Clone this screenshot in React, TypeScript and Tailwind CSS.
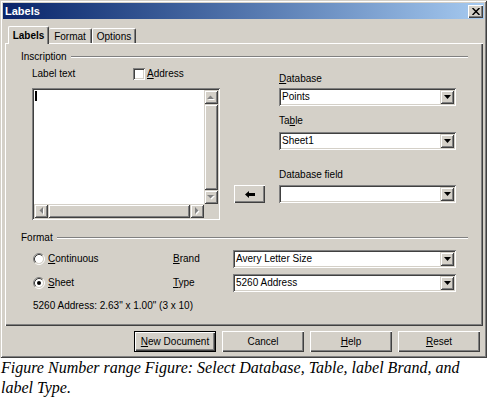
const sunken =
  "shadow-[inset_1px_1px_0_#808080,inset_-1px_-1px_0_#ffffff,inset_2px_2px_0_#404040,inset_-2px_-2px_0_#d4d0c8]";
const raised = "shadow-[inset_1px_1px_0_#ffffff,inset_-1px_-1px_0_#404040,inset_-2px_-2px_0_#808080]";
const raisedSb =
  "shadow-[inset_1px_1px_0_#d4d0c8,inset_-1px_-1px_0_#404040,inset_2px_2px_0_#ffffff,inset_-2px_-2px_0_#808080]";

function U({ children }: { children: string }) {
  return <span className="underline underline-offset-[1px]">{children}</span>;
}

function DropArrow() {
  return (
    <svg width="7" height="4" viewBox="0 0 7 4">
      <path d="M0 0h7L3.5 4z" fill="#000" />
    </svg>
  );
}

function Combo({ value, className }: { value: string; className: string }) {
  return (
    <div className={`${className} flex h-[18px] bg-white p-[2px] ${sunken}`}>
      <div className="flex flex-1 items-center overflow-hidden whitespace-nowrap pl-[1px]">{value}</div>
      <div className={`flex h-[14px] w-[14px] items-center justify-center bg-[#d4d0c8] ${raisedSb}`}>
        <DropArrow />
      </div>
    </div>
  );
}

function GrayArrow({ dir }: { dir: "up" | "down" | "left" | "right" }) {
  const paths = {
    up: "M0 4h7L3.5 0.5z",
    down: "M0 0h7L3.5 3.5z",
    left: "M4 0v7L0.5 3.5z",
    right: "M0 0v7L3.5 3.5z",
  };
  const vertical = dir === "up" || dir === "down";
  return (
    <svg width={vertical ? 8 : 5} height={vertical ? 5 : 8} viewBox={vertical ? "0 0 8 5" : "0 0 5 8"}>
      <path d={paths[dir]} fill="#fff" transform="translate(1 1)" />
      <path d={paths[dir]} fill="#808080" />
    </svg>
  );
}

function SbButton({ dir }: { dir: "up" | "down" | "left" | "right" }) {
  return (
    <div className={`flex h-[14px] w-[14px] items-center justify-center bg-[#d4d0c8] ${raisedSb}`}>
      <GrayArrow dir={dir} />
    </div>
  );
}

function Radio({ checked }: { checked?: boolean }) {
  return (
    <svg width="12" height="12" viewBox="0 0 12 12" className="shrink-0">
      <circle cx="6" cy="6" r="4" fill="#fff" />
      <path d="M2.11 9.89A5.5 5.5 0 0 1 9.89 2.11" stroke="#808080" fill="none" />
      <path d="M9.89 2.11A5.5 5.5 0 0 1 2.11 9.89" stroke="#fff" fill="none" />
      <path d="M2.82 9.18A4.5 4.5 0 0 1 9.18 2.82" stroke="#404040" fill="none" />
      <path d="M9.18 2.82A4.5 4.5 0 0 1 2.82 9.18" stroke="#d4d0c8" fill="none" />
      {checked && <circle cx="6" cy="6" r="2" fill="#000" />}
    </svg>
  );
}

function GroupHeader({ label }: { label: string }) {
  return (
    <div className="flex h-[12px] items-center pl-[16px] pr-[15px]">
      <span>{label}</span>
      <div className="ml-[4px] h-[2px] flex-1 border-t border-b border-t-[#808080] border-b-white" />
    </div>
  );
}

function PushButton({ children, isDefault }: { children: React.ReactNode; isDefault?: boolean }) {
  return (
    <div className={`h-[21px] w-[82px] ${isDefault ? "border border-black" : ""}`}>
      <div className={`flex h-full w-full items-center justify-center bg-[#d4d0c8] ${raised}`}>{children}</div>
    </div>
  );
}

export default function App() {
  return (
    <div className="h-[405px] w-[488px] bg-white font-['Liberation_Sans',Arial,sans-serif] text-[10px] leading-[12px] text-black">
      <div
        className={`flex h-[358px] w-[487px] flex-col bg-[#d4d0c8] p-[3px] shadow-[inset_1px_1px_0_#d4d0c8,inset_-1px_-1px_0_#404040,inset_2px_2px_0_#ffffff,inset_-2px_-2px_0_#808080]`}
      >
        {/* title bar */}
        <div className="flex h-[16px] items-center bg-linear-to-r from-[#0a246a] to-[#a6caf0] pl-[2px] pr-[1px]">
          <span className="text-[11px] font-bold text-white">Labels</span>
          <div className={`ml-auto flex h-[13px] w-[15px] items-center justify-center bg-[#d4d0c8] ${raised}`}>
            <svg width="8" height="7" viewBox="0 0 8 7">
              <path d="M0.5 0 7.5 7M7.5 0 0.5 7" stroke="#000" strokeWidth="1.5" />
            </svg>
          </div>
        </div>

        {/* tabs */}
        <div className="mt-[7px] flex h-[17px] items-end pl-[5px]">
          <div className="relative z-10 -mb-[1px] flex h-[18px] w-[41px] justify-center rounded-t-[2px] border-t border-r border-l border-white border-r-[#404040] bg-[#d4d0c8] pt-[3px] font-bold shadow-[inset_-1px_0_0_#808080]">
            Labels
          </div>
          <div className="flex h-[15px] w-[43px] justify-center rounded-t-[2px] border-t border-r border-white border-r-[#404040] pt-[2px] shadow-[inset_-1px_0_0_#808080]">
            Format
          </div>
          <div className="flex h-[15px] w-[44px] justify-center rounded-t-[2px] border-t border-r border-l border-white border-r-[#404040] pt-[2px] shadow-[inset_-1px_0_0_#808080]">
            Options
          </div>
        </div>

        {/* tab panel */}
        <div className="ml-[2px] flex h-[283px] w-[478px] flex-col bg-[#d4d0c8] shadow-[inset_1px_1px_0_#ffffff,inset_-1px_-1px_0_#404040,inset_-2px_-2px_0_#808080]">
          <div className="mt-[8px]">
            <GroupHeader label="Inscription" />
          </div>

          <div className="flex items-start pl-[27px]">
            {/* left column */}
            <div className="w-[188px]">
              <div className="mt-[5px] flex h-[12px] items-center">
                <span className="w-[101px]">Label text</span>
                <div className={`h-[12px] w-[12px] bg-white ${sunken}`} />
                <span className="ml-[2px]">
                  <U>A</U>ddress
                </span>
              </div>
              <div className={`mt-[8px] grid h-[132px] w-[188px] grid-cols-[1fr_14px] grid-rows-[1fr_14px] bg-white p-[2px] ${sunken}`}>
                <div className="pl-[1px] pt-[1px]">
                  <div className="h-[10px] w-[2px] bg-black" />
                </div>
                <div className="flex flex-col">
                  <SbButton dir="up" />
                  <div className={`flex-1 bg-[#d4d0c8] ${raisedSb}`} />
                  <SbButton dir="down" />
                </div>
                <div className="flex">
                  <SbButton dir="left" />
                  <div className={`flex-1 bg-[#d4d0c8] ${raisedSb}`} />
                  <SbButton dir="right" />
                </div>
                <div className="bg-[#d4d0c8]" />
              </div>
            </div>

            {/* middle column */}
            <div className="w-[59px]">
              <div className={`ml-[14px] mt-[122px] flex h-[18px] w-[31px] items-center justify-center bg-[#d4d0c8] ${raised}`}>
                <svg width="10" height="7" viewBox="0 0 10 7">
                  <path d="M0 3.5 4 0v2h6v3H4v2z" fill="#000" />
                </svg>
              </div>
            </div>

            {/* right column */}
            <div className="w-[177px]">
              <div className="mt-[10px]">
                <U>D</U>atabase
              </div>
              <Combo value="Points" className="mt-[3px] w-[177px]" />
              <div className="mt-[9px]">
                Ta<U>b</U>le
              </div>
              <Combo value="Sheet1" className="mt-[5px] w-[177px]" />
              <div className="mt-[19px]">Database field</div>
              <Combo value="" className="mt-[4px] w-[177px]" />
            </div>
          </div>

          <div className="mt-[12px]">
            <GroupHeader label="Format" />
          </div>

          <div className="mt-[6px] flex h-[18px] items-center pl-[28px]">
            <div className="flex w-[140px] items-center gap-[3px]">
              <Radio />
              <span>
                <U>C</U>ontinuous
              </span>
            </div>
            <span className="w-[60px]">
              <U>B</U>rand
            </span>
            <Combo value="Avery Letter Size" className="w-[223px]" />
          </div>
          <div className="mt-[6px] flex h-[18px] items-center pl-[28px]">
            <div className="flex w-[140px] items-center gap-[3px]">
              <Radio checked />
              <span>
                <U>S</U>heet
              </span>
            </div>
            <span className="w-[60px]">
              <U>T</U>ype
            </span>
            <Combo value="5260 Address" className="w-[223px]" />
          </div>
          <div className="mt-[8px] pl-[28px]">{'5260 Address: 2.63" x 1.00" (3 x 10)'}</div>
        </div>

        {/* buttons */}
        <div className="mt-[5px] flex justify-end gap-[6px] pr-[4px]">
          <PushButton isDefault>
            <span>
              <U>N</U>ew Document
            </span>
          </PushButton>
          <PushButton>Cancel</PushButton>
          <PushButton>
            <span>
              <U>H</U>elp
            </span>
          </PushButton>
          <PushButton>
            <span>
              <U>R</U>eset
            </span>
          </PushButton>
        </div>
      </div>

      <div className="pl-[1px] font-['Liberation_Serif','Times_New_Roman',serif] text-[16px] italic leading-[20px]">
        <div className="whitespace-nowrap">Figure Number range Figure: Select Database, Table, label Brand, and</div>
        <div className="whitespace-nowrap">label Type.</div>
      </div>
    </div>
  );
}
